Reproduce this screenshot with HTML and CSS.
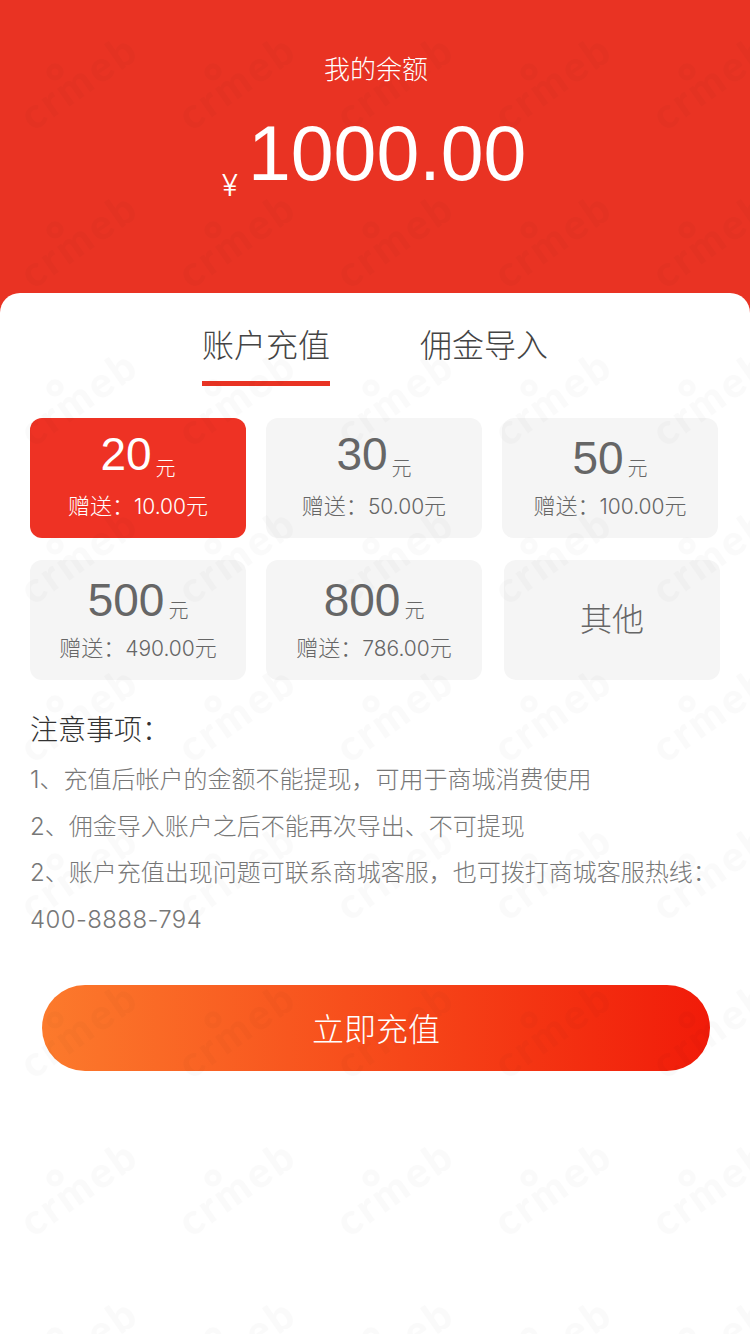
FILE: index.html
```html
<!DOCTYPE html>
<html lang="zh-CN">
<head>
  <meta charset="UTF-8">
  <meta name="viewport" content="width=device-width, initial-scale=1.0">
  <title>我的余额</title>
  <link rel="stylesheet" href="styles.css">
</head>
<body>
  <div class="page">
    <div class="balance">
      <div class="balance-title">我的余额</div>
      <div class="balance-num"><span class="balance-unit">¥</span>1000.00</div>
    </div>
    <div class="panel">
      <div class="tabs">
        <div class="tab on">账户充值</div>
        <div class="tab">佣金导入</div>
      </div>
      <div class="picks">
        <div class="pick on raised">
          <div class="pick-num">20<span class="pick-unit">元</span></div>
          <div class="pick-gift">赠送：<span class="gift-num">10.00</span>元</div>
        </div>
        <div class="pick raised">
          <div class="pick-num">30<span class="pick-unit">元</span></div>
          <div class="pick-gift">赠送：<span class="gift-num">50.00</span>元</div>
        </div>
        <div class="pick">
          <div class="pick-num">50<span class="pick-unit">元</span></div>
          <div class="pick-gift">赠送：<span class="gift-num">100.00</span>元</div>
        </div>
        <div class="pick">
          <div class="pick-num">500<span class="pick-unit">元</span></div>
          <div class="pick-gift">赠送：<span class="gift-num">490.00</span>元</div>
        </div>
        <div class="pick">
          <div class="pick-num">800<span class="pick-unit">元</span></div>
          <div class="pick-gift">赠送：<span class="gift-num">786.00</span>元</div>
        </div>
        <div class="pick other">其他</div>
      </div>
      <div class="notes">
        <div class="notes-title">注意事项：</div>
        <p>1、充值后帐户的金额不能提现，可用于商城消费使用</p>
        <p>2、佣金导入账户之后不能再次导出、不可提现</p>
        <p>2、账户充值出现问题可联系商城客服，也可拨打商城客服热线：<span class="phone">400-8888-794</span></p>
      </div>
      <button class="pay">立即充值</button>
    </div>
  </div>
  <!-- crmeb watermark over the whole page -->
  <svg class="watermark" width="750" height="1334" aria-hidden="true">
    <defs>
      <pattern id="mark" width="158" height="158" patternUnits="userSpaceOnUse">
        <text class="mark-text" transform="translate(33 132) rotate(-35)">crmeb</text>
        <circle class="mark-dot" cx="55" cy="72" r="6"></circle>
      </pattern>
    </defs>
    <rect width="750" height="1334" fill="url(#mark)"></rect>
  </svg>
</body>
</html>
```

FILE: styles.css
```css
* {
  box-sizing: border-box;
}

body {
  margin: 0;
  font-family: "Liberation Sans", "Noto Sans CJK SC", sans-serif;
  color: #333;
}

.page {
  display: flex;
  flex-direction: column;
  height: 1334px;
  overflow: hidden;
  background-color: #e93323;
}

.balance {
  height: 293px;
  padding-top: 52px;
  color: #fff;
  text-align: center;
}

.balance-title {
  padding-left: 2px;
  font-size: 26px;
  font-weight: 300;
  line-height: 36px;
}

.balance-num {
  height: 92px;
  margin-top: 19px;
  padding-right: 2px;
  font-size: 77px;
  line-height: 92px;
}

.balance-unit {
  margin-right: 10px;
  font-family: "Inter", sans-serif;
  font-size: 30px;
  font-weight: 300;
  line-height: 1;
  vertical-align: -16px;
}

.panel {
  flex: 1;
  padding: 0 30px;
  background-color: #fff;
  border-radius: 20px 20px 0 0;
}

.tabs {
  display: flex;
  justify-content: center;
  gap: 90px;
}

.tab {
  height: 93px;
  padding-top: 30px;
  font-size: 32px;
  font-weight: 300;
  line-height: 46px;
  color: #444;
  border-bottom: 5px solid transparent;
}

.tab.on {
  border-bottom-color: #e93323;
}

.picks {
  display: flex;
  flex-wrap: wrap;
  gap: 22px 20px;
  width: 700px;
  margin-top: 32px;
}

.pick {
  width: 216px;
  height: 120px;
  padding-top: 12px;
  font-weight: 300;
  text-align: center;
  color: #666;
  background-color: #f5f5f5;
  border-radius: 12px;
}

.pick.raised {
  padding-top: 8px;
}

.pick.on {
  color: #fff;
  background-color: #ee3224;
}

.pick-num {
  height: 56px;
  font-size: 46px;
  font-weight: 400;
  line-height: 56px;
}

.pick-unit {
  margin-left: 4px;
  font-size: 20px;
  font-weight: 300;
  vertical-align: -2px;
}

.pick.raised .pick-unit {
  vertical-align: -6px;
}

.pick-gift {
  margin-top: 6px;
  font-size: 22px;
  line-height: 30px;
}

.pick.raised .pick-gift {
  margin-top: 10px;
}

.gift-num {
  font-family: "Inter", sans-serif;
  font-size: 21px;
  font-weight: 300;
}

.pick.other {
  margin-left: 2px;
  padding-top: 0;
  font-size: 32px;
  line-height: 120px;
}

.notes {
  margin-top: 28px;
  font-family: "Inter", "Noto Sans CJK SC", sans-serif;
  font-weight: 300;
  color: #777;
}

.notes-title {
  margin-top: 1px;
  margin-bottom: 5px;
  font-size: 28px;
  line-height: 44px;
  color: #333;
}

.notes p {
  margin: 0;
  font-size: 24px;
  line-height: 46.5px;
}

.phone {
  letter-spacing: 0.4px;
}

.pay {
  display: block;
  width: 668px;
  height: 86px;
  margin: 42px 0 0 12px;
  padding-bottom: 4px;
  font-family: inherit;
  font-size: 32px;
  font-weight: 300;
  color: #fff;
  background: linear-gradient(to right, #fc7a2c, #f11b09);
  border: none;
  border-radius: 43px;
}

.watermark {
  position: absolute;
  top: 0;
  left: 0;
  pointer-events: none;
}

.mark-text {
  font-family: "Lato", sans-serif;
  font-size: 42px;
  font-weight: 900;
  letter-spacing: 3px;
  fill: #000;
  fill-opacity: 0.02;
}

.mark-dot {
  fill: none;
  stroke: #000;
  stroke-opacity: 0.02;
  stroke-width: 5px;
}
```
